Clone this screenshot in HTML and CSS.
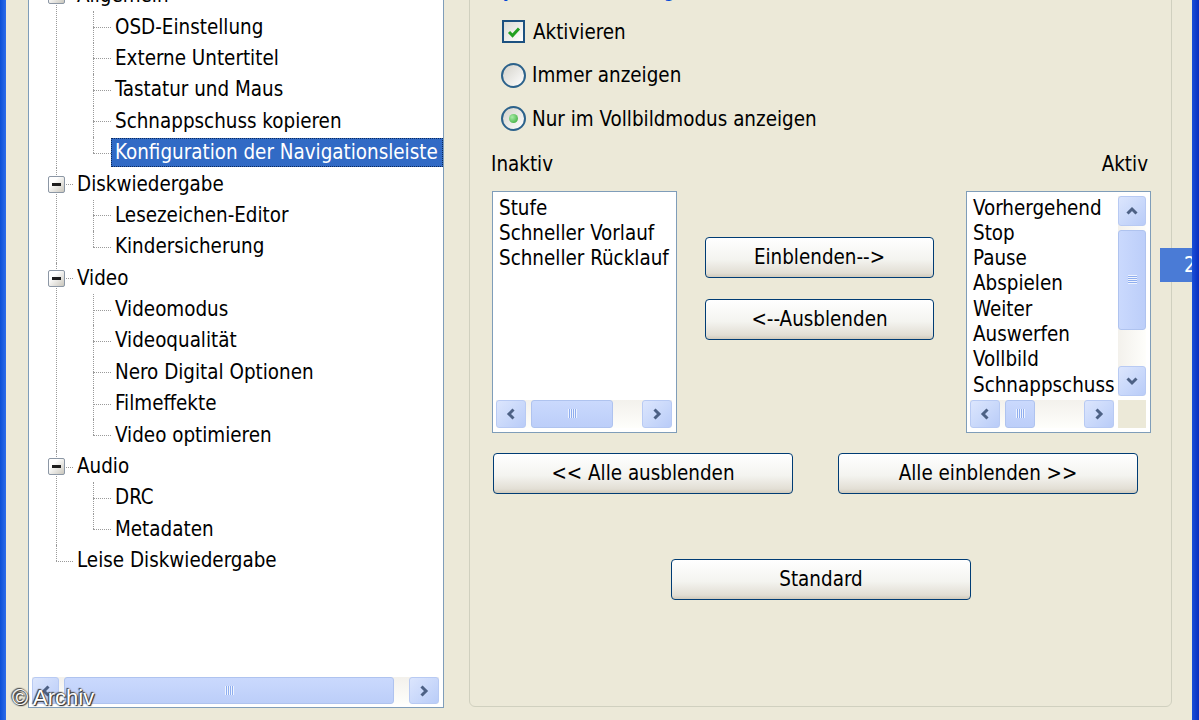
FILE: index.html
```html
<!DOCTYPE html>
<html lang="de">
<head>
  <meta charset="UTF-8">
  <title>Konfiguration der Navigationsleiste</title>
  <link rel="stylesheet" href="styles.css">
</head>
<body>

  <div class="window">
    <div class="frame-left"></div>

    <div class="dialog">

      <!-- Tree view -->
      <div class="tree">
        <ul class="tree-list">
          <li class="top">
            <div class="row"><span class="exp"></span><span class="label">Allgemein</span></div>
            <ul>
              <li class="child"><div class="row"><span class="label">OSD-Einstellung</span></div></li>
              <li class="child"><div class="row"><span class="label">Externe Untertitel</span></div></li>
              <li class="child"><div class="row"><span class="label">Tastatur und Maus</span></div></li>
              <li class="child"><div class="row"><span class="label">Schnappschuss kopieren</span></div></li>
              <li class="child"><div class="row"><span class="label selected">Konfiguration der Navigationsleiste</span></div></li>
            </ul>
          </li>
          <li class="top">
            <div class="row"><span class="exp"></span><span class="label">Diskwiedergabe</span></div>
            <ul>
              <li class="child"><div class="row"><span class="label">Lesezeichen-Editor</span></div></li>
              <li class="child"><div class="row"><span class="label">Kindersicherung</span></div></li>
            </ul>
          </li>
          <li class="top">
            <div class="row"><span class="exp"></span><span class="label">Video</span></div>
            <ul>
              <li class="child"><div class="row"><span class="label">Videomodus</span></div></li>
              <li class="child"><div class="row"><span class="label">Videoqualität</span></div></li>
              <li class="child"><div class="row"><span class="label">Nero Digital Optionen</span></div></li>
              <li class="child"><div class="row"><span class="label">Filmeffekte</span></div></li>
              <li class="child"><div class="row"><span class="label">Video optimieren</span></div></li>
            </ul>
          </li>
          <li class="top">
            <div class="row"><span class="exp"></span><span class="label">Audio</span></div>
            <ul>
              <li class="child"><div class="row"><span class="label">DRC</span></div></li>
              <li class="child"><div class="row"><span class="label">Metadaten</span></div></li>
            </ul>
          </li>
          <li class="top">
            <div class="row"><span class="exp-none"></span><span class="label">Leise Diskwiedergabe</span></div>
          </li>
        </ul>

        <div class="hscroll tree-scroll">
          <span class="sb-btn">
            <svg width="14" height="14" viewBox="0 0 14 14"><path d="M9.5 2.5 L5 7 L9.5 11.5" fill="none" stroke="#4D6185" stroke-width="3"/></svg>
          </span>
          <span class="sb-thumb tree-thumb"><span class="grip-v"></span></span>
          <span class="sb-space"></span>
          <span class="sb-btn wide">
            <svg width="14" height="14" viewBox="0 0 14 14"><path d="M4.5 2.5 L9 7 L4.5 11.5" fill="none" stroke="#4D6185" stroke-width="3"/></svg>
          </span>
        </div>
      </div>

      <!-- Settings group -->
      <div class="group">
        <div class="legend">Symbolleiste anzeigen lassen</div>

        <div class="option first">
          <span class="checkbox">
            <svg width="16" height="16" viewBox="0 0 16 16"><path d="M3 8 L6.5 11.5 L13 4.5" fill="none" stroke="#21A121" stroke-width="3"/></svg>
          </span>
          <span>Aktivieren</span>
        </div>
        <div class="option">
          <span class="radio"></span>
          <span>Immer anzeigen</span>
        </div>
        <div class="option">
          <span class="radio checked"></span>
          <span>Nur im Vollbildmodus anzeigen</span>
        </div>

        <div class="list-labels">
          <span>Inaktiv</span>
          <span>Aktiv</span>
        </div>

        <div class="lists">
          <div class="listbox">
            <div class="items">
              <div>Stufe</div>
              <div>Schneller Vorlauf</div>
              <div>Schneller Rücklauf</div>
            </div>
            <div class="hscroll">
              <span class="sb-btn wide">
                <svg width="14" height="14" viewBox="0 0 14 14"><path d="M9.5 2.5 L5 7 L9.5 11.5" fill="none" stroke="#4D6185" stroke-width="3"/></svg>
              </span>
              <span class="sb-thumb inactive-thumb"><span class="grip-v"></span></span>
              <span class="sb-space"></span>
              <span class="sb-btn wide">
                <svg width="14" height="14" viewBox="0 0 14 14"><path d="M4.5 2.5 L9 7 L4.5 11.5" fill="none" stroke="#4D6185" stroke-width="3"/></svg>
              </span>
            </div>
          </div>

          <div class="move-buttons">
            <button class="btn move">Einblenden--&gt;</button>
            <button class="btn move">&lt;--Ausblenden</button>
          </div>

          <div class="listbox with-v">
            <div class="items">
              <div>Vorhergehend</div>
              <div>Stop</div>
              <div>Pause</div>
              <div>Abspielen</div>
              <div>Weiter</div>
              <div>Auswerfen</div>
              <div>Vollbild</div>
              <div>Schnappschuss</div>
            </div>
            <div class="vscroll">
              <span class="sb-btn tall">
                <svg width="14" height="14" viewBox="0 0 14 14"><path d="M2.5 9.5 L7 5 L11.5 9.5" fill="none" stroke="#4D6185" stroke-width="3"/></svg>
              </span>
              <span class="sb-thumb v-thumb"><span class="grip-h"></span></span>
              <span class="sb-space"></span>
              <span class="sb-btn tall">
                <svg width="14" height="14" viewBox="0 0 14 14"><path d="M2.5 4.5 L7 9 L11.5 4.5" fill="none" stroke="#4D6185" stroke-width="3"/></svg>
              </span>
            </div>
            <div class="hscroll">
              <span class="sb-btn wide">
                <svg width="14" height="14" viewBox="0 0 14 14"><path d="M9.5 2.5 L5 7 L9.5 11.5" fill="none" stroke="#4D6185" stroke-width="3"/></svg>
              </span>
              <span class="sb-thumb small-thumb"><span class="grip-v"></span></span>
              <span class="sb-space"></span>
              <span class="sb-btn wide">
                <svg width="14" height="14" viewBox="0 0 14 14"><path d="M4.5 2.5 L9 7 L4.5 11.5" fill="none" stroke="#4D6185" stroke-width="3"/></svg>
              </span>
            </div>
            <div class="corner"></div>
          </div>
        </div>

        <div class="all-buttons">
          <button class="btn wide-btn">&lt;&lt; Alle ausblenden</button>
          <button class="btn wide-btn">Alle einblenden &gt;&gt;</button>
        </div>

        <div class="standard-row">
          <button class="btn wide-btn">Standard</button>
        </div>
      </div>

      <div class="side-gap"></div>
    </div>

    <div class="frame-right"></div>

    <!-- overlays -->
    <div class="page-tab">2</div>
    <div class="watermark">© Archiv</div>
  </div>

</body>
</html>
```

FILE: styles.css
```css
/* Reset */
* {
  margin: 0;
  padding: 0;
  box-sizing: border-box;
}

body {
  width: 1199px;
  height: 720px;
  overflow: hidden;
  background-color: #ECE9D8;
  font-family: 'DejaVu Sans Condensed', 'DejaVu Sans', sans-serif;
  font-size: 20.4px;
  color: #000;
}

.window {
  position: relative;
  display: flex;
  height: 720px;
}

.frame-left {
  width: 6px;
  background: linear-gradient(to right, #0B4ED6, #2E6DEA);
}

.frame-right {
  width: 7px;
  background: linear-gradient(to right, #1A4FD8, #0A2FBF);
}

.dialog {
  flex: 1;
  display: flex;
  padding-left: 22px;
}

/* Tree view */
.tree {
  width: 416px;
  height: 731px;
  margin-top: -23px;
  border: 1px solid #7F9DB9;
  background-color: #fff;
  display: flex;
  flex-direction: column;
}

.tree-list {
  flex: 1;
  list-style: none;
  padding-top: 2px;
  overflow: hidden;
}

.tree-list ul {
  list-style: none;
}

.tree-list li {
  position: relative;
}

.row {
  position: relative;
  height: 31.4px;
  display: flex;
  align-items: center;
  white-space: nowrap;
}

/* dotted connector lines */
.top::before {
  content: "";
  position: absolute;
  left: 27px;
  top: 0;
  bottom: 0;
  border-left: 1px dotted #9A9A9A;
}

.top:last-child::before {
  bottom: auto;
  height: 15.7px;
}

.top > .row::before {
  content: "";
  position: absolute;
  left: 27px;
  width: 17px;
  top: 50%;
  border-top: 1px dotted #9A9A9A;
}

.child::before {
  content: "";
  position: absolute;
  left: 64px;
  top: 0;
  bottom: 0;
  border-left: 1px dotted #9A9A9A;
}

.child:last-child::before {
  bottom: auto;
  height: 15.7px;
}

.child > .row::before {
  content: "";
  position: absolute;
  left: 64px;
  width: 18px;
  top: 50%;
  border-top: 1px dotted #9A9A9A;
}

.exp,
.exp-none {
  position: relative;
  z-index: 1;
  width: 17px;
  height: 17px;
  margin-left: 19px;
  margin-right: 8px;
}

.exp {
  border: 1px solid #8C97A5;
  border-radius: 2px;
  background: linear-gradient(135deg, #FFFFFF 30%, #C9C6BC);
}

.exp::after {
  content: "";
  position: absolute;
  left: 3px;
  right: 3px;
  top: 6px;
  height: 3px;
  background-color: #1E1E1E;
}

.exp-none {
  visibility: hidden;
}

.label {
  padding: 0 4px;
  line-height: 29px;
}

.child .label {
  margin-left: 82px;
}

.label.selected {
  background-color: #316AC5;
  color: #fff;
  outline: 1px dotted #0C2A5C;
  outline-offset: -1px;
  flex: 1;
  overflow: hidden;
}

/* Scrollbars */
.hscroll {
  display: flex;
  height: 28px;
  background: linear-gradient(to bottom, #F3F1EC, #FEFEFB);
}

.vscroll {
  display: flex;
  flex-direction: column;
  background: linear-gradient(to right, #F3F1EC, #FEFEFB);
}

.tree-scroll {
  height: 27px;
  margin: 0 4px 3px 3px;
}

.sb-btn {
  width: 27px;
  display: flex;
  align-items: center;
  justify-content: center;
  border: 1px solid #B8CAF3;
  border-radius: 3px;
  background: linear-gradient(135deg, #DCE6FD, #B9CCF8);
}

.sb-btn.wide {
  width: 30px;
}

.sb-btn.tall {
  width: auto;
  height: 30px;
}

.sb-space {
  flex: 1;
}

.sb-thumb {
  display: flex;
  align-items: center;
  justify-content: center;
  margin-left: 5px;
  border: 1px solid #AFC3EF;
  border-radius: 3px;
  background: linear-gradient(to bottom, #CAD9FD, #BCCEF9);
}

.tree-thumb {
  width: 330px;
}

.inactive-thumb {
  width: 82px;
}

.small-thumb {
  width: 30px;
}

.v-thumb {
  height: 100px;
  margin-left: 0;
  margin-top: 4px;
  background: linear-gradient(to right, #CAD9FD, #BCCEF9);
}

.grip-v {
  width: 9px;
  height: 9px;
  background: repeating-linear-gradient(to right, #EEF3FE 0 1px, #8FAEEF 1px 2px);
}

.grip-h {
  width: 9px;
  height: 9px;
  background: repeating-linear-gradient(to bottom, #EEF3FE 0 1px, #8FAEEF 1px 2px);
}

/* Group box */
.group {
  width: 703px;
  height: 730px;
  margin-top: -23px;
  margin-left: 25px;
  padding: 0 20px 0 21px;
  border: 1px solid #D0D0BF;
  border-radius: 6px;
  display: flex;
  flex-direction: column;
}

.side-gap {
  width: 20px;
}

.legend {
  height: 24px;
  line-height: 24px;
  color: #0046D5;
}

.option {
  height: 43.5px;
  display: flex;
  align-items: center;
  gap: 8px;
  padding-left: 11px;
}

.option.first {
  margin-top: 8px;
}

.checkbox {
  width: 23px;
  height: 23px;
  display: flex;
  align-items: center;
  justify-content: center;
  border: 2px solid #1C5180;
  background: linear-gradient(135deg, #DCDCD4, #FFFFFF);
}

.radio {
  position: relative;
  width: 25px;
  height: 25px;
  margin-right: -2px;
  margin-left: -1px;
  border: 2px solid #2C628B;
  border-radius: 50%;
  background: linear-gradient(135deg, #D4D2CA, #FFFFFF);
}

.radio.checked::after {
  content: "";
  position: absolute;
  left: 6px;
  top: 6px;
  width: 9px;
  height: 9px;
  border-radius: 50%;
  background: radial-gradient(circle at 35% 35%, #A8ECA8, #2DA42D);
}

.list-labels {
  display: flex;
  justify-content: space-between;
  height: 24px;
  line-height: 24px;
  margin-top: 11px;
  padding-right: 3px;
}

.lists {
  display: flex;
  margin-top: 15px;
  height: 242px;
}

.listbox {
  width: 185px;
  margin-left: 1px;
  border: 1px solid #7F9DB9;
  background-color: #fff;
  display: grid;
  grid-template-rows: 1fr 28px;
  gap: 4px;
  padding: 4px 4px 4px 3px;
}

.listbox.with-v {
  grid-template-columns: 1fr 28px;
  margin-left: 32px;
}

.items {
  overflow: hidden;
  white-space: nowrap;
  line-height: 25.3px;
  padding-left: 3px;
}

.corner {
  background-color: #ECE9D8;
}

.move-buttons {
  display: flex;
  flex-direction: column;
  gap: 21px;
  margin-left: 28px;
  padding-top: 46px;
}

/* Buttons */
.btn {
  height: 41px;
  border: 1px solid #003C74;
  border-radius: 4px;
  background: linear-gradient(to bottom, #FFFFFF, #F4F4F0 55%, #E2DED4 90%, #D0CABC);
  font-family: inherit;
  font-size: 20.4px;
  color: #000;
}

.btn.move {
  width: 229px;
}

.btn.wide-btn {
  width: 300px;
}

.all-buttons {
  display: flex;
  gap: 45px;
  margin-top: 20px;
  padding-left: 2px;
}

.standard-row {
  display: flex;
  justify-content: center;
  margin-top: 65px;
}

/* Overlays */
.page-tab {
  position: absolute;
  left: 1160px;
  top: 248px;
  width: 32px;
  height: 34px;
  padding-left: 24px;
  background-color: #4A7BD6;
  color: #fff;
  line-height: 34px;
  overflow: hidden;
}

.watermark {
  position: absolute;
  left: 12px;
  top: 685px;
  font-family: 'Liberation Sans', Arial, sans-serif;
  font-size: 22px;
  color: #fff;
  text-shadow: 0 0 2px #333, 1px 1px 1px #222, -1px -1px 1px #444;
}
```
